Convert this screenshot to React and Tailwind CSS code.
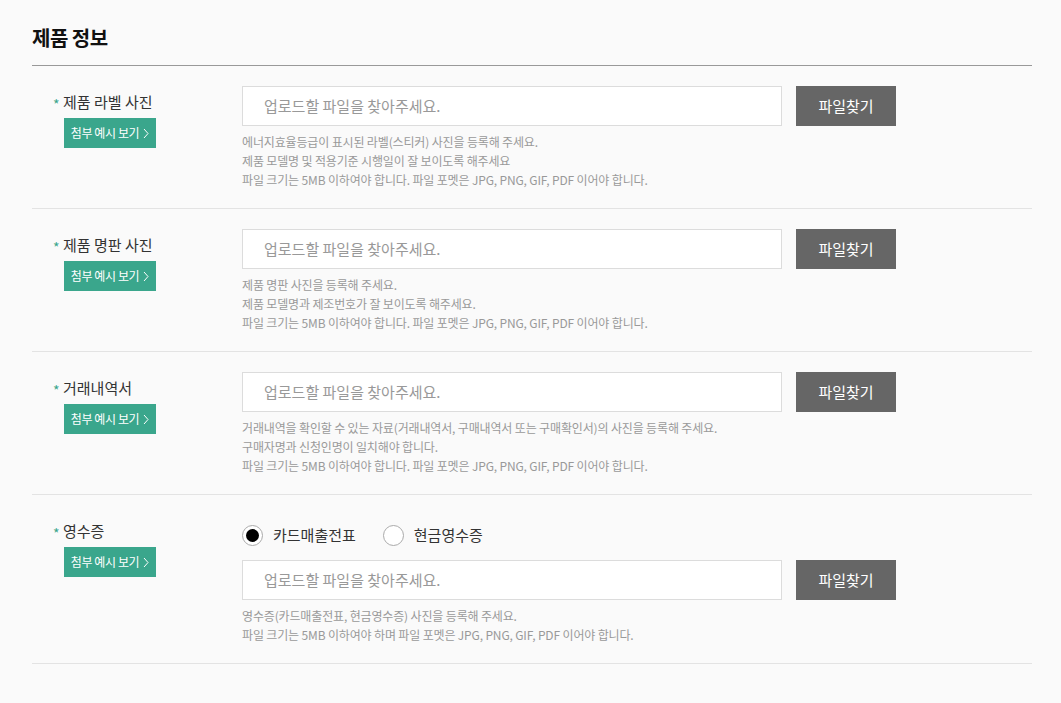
import { useState } from "react";

const fileRows = [
  {
    label: "제품 라벨 사진",
    help: [
      "에너지효율등급이 표시된 라벨(스티커) 사진을 등록해 주세요.",
      "제품 모델명 및 적용기준 시행일이 잘 보이도록 해주세요",
      "파일 크기는 5MB 이하여야 합니다. 파일 포멧은 JPG, PNG, GIF, PDF 이어야 합니다.",
    ],
  },
  {
    label: "제품 명판 사진",
    help: [
      "제품 명판 사진을 등록해 주세요.",
      "제품 모델명과 제조번호가 잘 보이도록 해주세요.",
      "파일 크기는 5MB 이하여야 합니다. 파일 포멧은 JPG, PNG, GIF, PDF 이어야 합니다.",
    ],
  },
  {
    label: "거래내역서",
    help: [
      "거래내역을 확인할 수 있는 자료(거래내역서, 구매내역서 또는 구매확인서)의 사진을 등록해 주세요.",
      "구매자명과 신청인명이 일치해야 합니다.",
      "파일 크기는 5MB 이하여야 합니다. 파일 포멧은 JPG, PNG, GIF, PDF 이어야 합니다.",
    ],
  },
];

function Label({ text }) {
  return (
    <div className="w-[210px] shrink-0 pl-[21px] pt-[5px]">
      <div className="flex items-center h-[22px] text-[15px] text-[#333]">
        <span className="text-[#3aa68c] text-[14px] w-[10px] mt-[5px]">*</span>
        {text}
      </div>
      <button className="mt-[5px] ml-[11px] w-[92px] h-[30px] bg-[#3aa68c] text-white text-[12px] tracking-[-0.4px] flex items-center justify-center gap-[4px]">
        첨부 예시 보기
        <svg width="6" height="11" viewBox="0 0 6 11" fill="none">
          <path d="M1 1l4 4.5L1 10" stroke="white" strokeWidth="1" />
        </svg>
      </button>
    </div>
  );
}

function FileInput() {
  return (
    <div className="flex items-center gap-[14px]">
      <div className="w-[540px] h-[40px] bg-white border border-[#dcdcdc] flex items-center pl-[21px] text-[15px] text-[#999]">
        업로드할 파일을 찾아주세요.
      </div>
      <button className="w-[100px] h-[40px] bg-[#666666] text-white text-[15px]">
        파일찾기
      </button>
    </div>
  );
}

function Help({ lines }) {
  return (
    <div className="mt-[6px] text-[12px] leading-[19px] text-[#999] tracking-[-0.15px]">
      {lines.map((l) => (
        <p key={l}>{l}</p>
      ))}
    </div>
  );
}

function Radio({ checked, label, onClick }) {
  return (
    <button onClick={onClick} className="flex items-center gap-[10px] text-[15px] text-[#333]">
      <span className="w-[21px] h-[21px] rounded-full border border-[#aaa] bg-white flex items-center justify-center">
        {checked && <span className="w-[13px] h-[13px] rounded-full bg-black" />}
      </span>
      {label}
    </button>
  );
}

export default function App() {
  const [receipt, setReceipt] = useState("card");

  return (
    <div
      className="min-h-screen bg-[#fafafa] px-[32px]"
      style={{ fontFamily: '"Noto Sans CJK KR", "Noto Sans", sans-serif' }}
    >
      <div className="w-[1000px]">
        <div className="pt-[25px] pb-[14px] border-b border-[#999]">
          <h2 className="text-[20px] leading-[26px] font-bold text-[#111] tracking-[-0.5px]">
            제품 정보
          </h2>
        </div>

        {fileRows.map((row) => (
          <div key={row.label} className="flex pt-[20px] pb-[19px] border-b border-[#e3e3e3]">
            <Label text={row.label} />
            <div>
              <FileInput />
              <Help lines={row.help} />
            </div>
          </div>
        ))}

        <div className="flex pt-[20px] pb-[19px] border-b border-[#e3e3e3]">
          <Label text="영수증" />
          <div>
            <div className="h-[40px] flex items-center gap-[27px]">
              <Radio
                checked={receipt === "card"}
                label="카드매출전표"
                onClick={() => setReceipt("card")}
              />
              <Radio
                checked={receipt === "cash"}
                label="현금영수증"
                onClick={() => setReceipt("cash")}
              />
            </div>
            <div className="mt-[5px]">
              <FileInput />
            </div>
            <Help
              lines={[
                "영수증(카드매출전표, 현금영수증) 사진을 등록해 주세요.",
                "파일 크기는 5MB 이하여야 하며 파일 포멧은 JPG, PNG, GIF, PDF 이어야 합니다.",
              ]}
            />
          </div>
        </div>
      </div>
    </div>
  );
}
